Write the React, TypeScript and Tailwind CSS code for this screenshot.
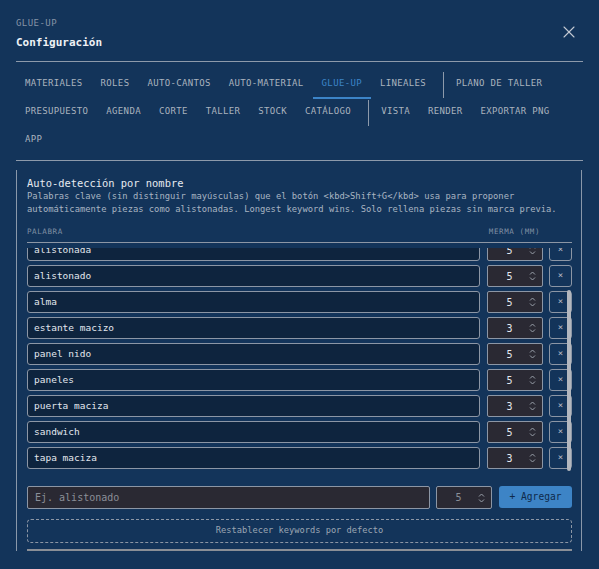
import { X } from 'lucide-react'

type Tab = { label: string; active?: boolean } | 'sep'

const tabRows: Tab[][] = [
    [
        { label: 'MATERIALES' },
        { label: 'ROLES' },
        { label: 'AUTO-CANTOS' },
        { label: 'AUTO-MATERIAL' },
        { label: 'GLUE-UP', active: true },
        { label: 'LINEALES' },
        'sep',
        { label: 'PLANO DE TALLER' },
    ],
    [
        { label: 'PRESUPUESTO' },
        { label: 'AGENDA' },
        { label: 'CORTE' },
        { label: 'TALLER' },
        { label: 'STOCK' },
        { label: 'CATÁLOGO' },
        'sep',
        { label: 'VISTA' },
        { label: 'RENDER' },
        { label: 'EXPORTAR PNG' },
    ],
    [{ label: 'APP' }],
]

const keywords = [
    { word: 'alistonada', merma: 5 },
    { word: 'alistonado', merma: 5 },
    { word: 'alma', merma: 5 },
    { word: 'estante macizo', merma: 3 },
    { word: 'panel nido', merma: 5 },
    { word: 'paneles', merma: 5 },
    { word: 'puerta maciza', merma: 3 },
    { word: 'sandwich', merma: 5 },
    { word: 'tapa maciza', merma: 3 },
]

function Spinner() {
    return (
        <svg width="7" height="12" viewBox="0 0 7 12" fill="none" stroke="#9aa1ab" strokeWidth="1" aria-hidden="true">
            <path d="M1 4.5 L3.5 2 L6 4.5" />
            <path d="M1 7.5 L3.5 10 L6 7.5" />
        </svg>
    )
}

function NumberBox({ value, dim }: { value: number; dim?: boolean }) {
    return (
        <div className="w-[56px] h-full flex items-center bg-[#2a2933] border border-[#8c96a5] rounded-[2px]">
            <span className={`flex-1 text-center pl-[2px] text-[10px] ${dim ? 'text-[#8a8f98]' : 'text-[#e4e8ee]'}`}>{value}</span>
            <span className="pr-[6px] flex items-center"><Spinner /></span>
        </div>
    )
}

export default function App() {
    return (
        <div className="w-[599px] h-[569px] overflow-hidden bg-[#13345a] text-[#e4e8ee]" style={{ fontFamily: '"DejaVu Sans Mono", "Liberation Mono", monospace' }}>

            {/* Header */}
            <div className="px-4 pt-[18px]">
                <div className="flex justify-between items-start border-b border-[#8d9aab] pb-[11px]">
                    <div>
                        <div className="text-[9px] leading-[10px] tracking-[0.45px] text-[#8593a6]">GLUE-UP</div>
                        <div className="mt-[8px] text-[11px] leading-[14px] font-bold text-[#eef1f5]">Configuración</div>
                    </div>
                    <X className="mt-[4px] mr-[4px] text-[#c3cad3]" size={20} strokeWidth={1.3} />
                </div>

                {/* Tabs */}
                <div className="pt-[9px] pb-[5px] border-b border-[#8d9aab]">
                    {tabRows.map((row, i) => (
                        <div key={i} className="flex h-[28px]">
                            {row.map((t, j) =>
                                t === 'sep' ? (
                                    <div key={j} className="w-px bg-[#8d9aab] ml-[8px] mr-[3px] my-[1px]" />
                                ) : (
                                    <div
                                        key={j}
                                        className={`px-[9px] flex items-center text-[9px] tracking-[0.34px] border-b-2 ${t.active ? 'text-[#3c84c8] border-[#3c84c8]' : 'text-[#aab3be] border-transparent'}`}
                                    >
                                        {t.label}
                                    </div>
                                )
                            )}
                        </div>
                    ))}
                </div>
            </div>

            {/* Glue-up keywords card */}
            <div className="mt-[9px] ml-[16px] mr-[17px] border-x border-[#8a98aa] pl-[10px] pr-[9px] pt-[6px]">
                <div className="text-[10.4px] leading-[14px] text-[#e6eaf0]">Auto-detección por nombre</div>
                <p className="text-[8.8px] leading-[13px] text-[#a9b4c2]">
                    Palabras clave (sin distinguir mayúsculas) que el botón &lt;kbd&gt;Shift+G&lt;/kbd&gt; usa para proponer automáticamente piezas como alistonadas. Longest keyword wins. Solo rellena piezas sin marca previa.
                </p>

                <div className="mt-[10px] h-[12px] pb-[4px] flex justify-between items-center border-b border-[#8c96a5] text-[7.5px] tracking-[0.6px] text-[#7f8fa3] box-content">
                    <span>PALABRA</span>
                    <span className="mr-[32px]">MERMA (MM)</span>
                </div>

                {/* Keyword list, scrolled a little */}
                <div className="relative mt-[5px] h-[223px] overflow-hidden">
                    <div className="-mt-[9px] flex flex-col gap-[4px]">
                        {keywords.map(k => (
                            <div key={k.word} className="flex h-[22px] gap-[7px]">
                                <div className="flex-1 flex items-center pl-[6px] bg-[#0e243e] border border-[#8c96a5] rounded-[3px] text-[9.5px] text-[#e2e7ee]">
                                    {k.word}
                                </div>
                                <NumberBox value={k.merma} />
                                <div className="ml-[-1px] w-[23px] flex items-center justify-center border border-[#8c96a5] rounded-[3px] bg-[#13345a] text-[9px] text-[#b3bbc6]">
                                    ×
                                </div>
                            </div>
                        ))}
                    </div>
                    <div className="absolute left-[540px] top-[42px] w-[4px] h-[181px] rounded-full bg-[#b3b7be]" />
                </div>

                {/* New keyword */}
                <div className="mt-[15px] flex h-[23px]">
                    <div className="flex-1 flex items-center pl-[7px] bg-[#2a2933] border border-[#8c96a5] rounded-[2px] text-[10px] text-[#8a8f98]">
                        Ej. alistonado
                    </div>
                    <div className="ml-[6px] h-full"><NumberBox value={5} dim /></div>
                    <button className="ml-[7px] w-[73px] h-[22px] rounded-[3px] bg-[#3d84c6] text-[9.6px] text-[#0f2a4a]">
                        + Agregar
                    </button>
                </div>

                <div className="mt-[10px] h-[24px] flex items-center justify-center border border-dashed border-[#8c96a5] rounded-[4px] text-[8.7px] text-[#9ba6b3]">
                    Restablecer keywords por defecto
                </div>

                <div className="mt-[6px] h-[2px] bg-[#8a8f97]" />
            </div>
        </div>
    )
}
